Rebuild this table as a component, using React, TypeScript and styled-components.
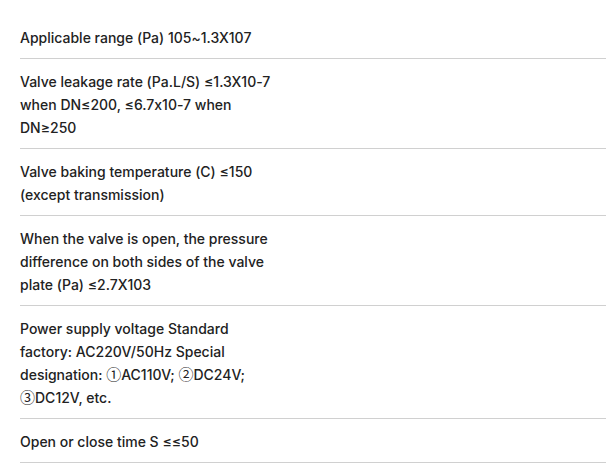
import React from "react";
import styled, { createGlobalStyle } from "styled-components";

const Global = createGlobalStyle`
  html, body { margin: 0; padding: 0; background: #ffffff; }
  body { font-family: Inter, "Noto Sans CJK SC", "DejaVu Sans", sans-serif; }
`;

const List = styled.ul`
  list-style: none;
  margin: 0;
  padding: 15px 0 0 20px;
`;

const Item = styled.li`
  border-bottom: 1px solid #d0d0d0;
  padding: 11px 0 9px;
`;

const Text = styled.p`
  margin: 0;
  max-width: 256px;
  font-size: 14px;
  line-height: 23px;
  font-weight: 500;
  color: #222222;
  font-feature-settings: "calt" 0;
`;

const Circled = styled.span`
  font-family: "Noto Sans CJK SC", sans-serif;
  font-weight: 400;
  font-size: 15px;
  line-height: 1;
`;

const specs = [
  "Applicable range (Pa) 105~1.3X107",
  "Valve leakage rate (Pa.L/S) ≤1.3X10-7 when DN≤200, ≤6.7x10-7 when DN≥250",
  "Valve baking temperature (C) ≤150 (except transmission)",
  "When the valve is open, the pressure difference on both sides of the valve plate (Pa) ≤2.7X103",
  "Power supply voltage Standard factory: AC220V/50Hz Special designation: ①AC110V; ②DC24V; ③DC12V, etc.",
  "Open or close time S ≤≤50",
];

function renderSpec(s: string) {
  return s.split(/([①②③])/).map((part, i) =>
    /[①②③]/.test(part) ? <Circled key={i}>{part}</Circled> : part
  );
}

export default function App() {
  return (
    <>
      <Global />
      <List>
        {specs.map((s) => (
          <Item key={s}>
            <Text>{renderSpec(s)}</Text>
          </Item>
        ))}
      </List>
    </>
  );
}
